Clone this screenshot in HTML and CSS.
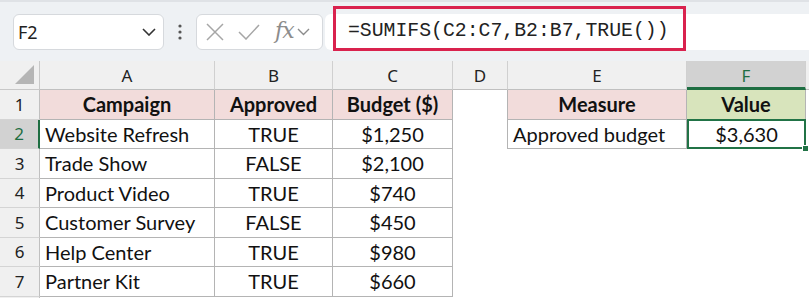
FILE: index.html
```html
<!DOCTYPE html>
<html>
<head>
<meta charset="utf-8">
<link rel="stylesheet" href="styles.css">
</head>
<body>
<div class="app">
  <div class="toolbar">
    <div class="namebox">
      <span class="namebox-text">F2</span>
      <svg class="chev" width="14" height="8" viewBox="0 0 14 8"><path d="M1 1 L7 7 L13 1" fill="none" stroke="#333" stroke-width="1.6"/></svg>
    </div>
    <div class="dots">
      <svg width="4" height="16" viewBox="0 0 4 16"><circle cx="2" cy="2" r="1.6" fill="#555"/><circle cx="2" cy="8" r="1.6" fill="#555"/><circle cx="2" cy="14" r="1.6" fill="#555"/></svg>
    </div>
    <div class="fxbox">
      <svg class="ico-x" width="18" height="18" viewBox="0 0 18 18"><path d="M1 1 L17 17 M17 1 L1 17" stroke="#a6a6a6" stroke-width="1.5" fill="none"/></svg>
      <svg class="ico-check" width="22" height="16" viewBox="0 0 22 16"><path d="M1 8 L8 15 L21 1" stroke="#a6a6a6" stroke-width="1.5" fill="none"/></svg>
      <span class="fx">fx</span>
      <svg class="ico-chev" width="13" height="8" viewBox="0 0 13 8"><path d="M1 1 L6.5 6.5 L12 1" stroke="#8c8c8c" stroke-width="1.4" fill="none"/></svg>
    </div>
    <div class="formula">
      <div class="formula-hl">=SUMIFS(C2:C7,B2:B7,TRUE())</div>
    </div>
  </div>
  <div class="sheet">
    <div class="corner"><span class="tri"></span></div>
    <div class="colh">A</div>
    <div class="colh">B</div>
    <div class="colh">C</div>
    <div class="colh">D</div>
    <div class="colh">E</div>
    <div class="colh sel">F</div>
    <div class="colh end"></div>

    <div class="rowh">1</div>
    <div class="c t hd pink">Campaign</div>
    <div class="c t hd pink">Approved</div>
    <div class="c t hd pink">Budget ($)</div>
    <div class="c d"></div>
    <div class="c t hd pink">Measure</div>
    <div class="c t hd green">Value</div>
    <div class="c"></div>

    <div class="rowh sel">2</div>
    <div class="c t">Website Refresh</div>
    <div class="c t ctr">TRUE</div>
    <div class="c t ctr">$1,250</div>
    <div class="c d"></div>
    <div class="c t">Approved budget</div>
    <div class="c t ctr active">$3,630<span class="handle"></span></div>
    <div class="c"></div>

    <div class="rowh">3</div>
    <div class="c t">Trade Show</div>
    <div class="c t ctr">FALSE</div>
    <div class="c t ctr">$2,100</div>
    <div class="c"></div>
    <div class="c"></div>
    <div class="c"></div>
    <div class="c"></div>

    <div class="rowh">4</div>
    <div class="c t">Product Video</div>
    <div class="c t ctr">TRUE</div>
    <div class="c t ctr">$740</div>
    <div class="c"></div>
    <div class="c"></div>
    <div class="c"></div>
    <div class="c"></div>

    <div class="rowh">5</div>
    <div class="c t">Customer Survey</div>
    <div class="c t ctr">FALSE</div>
    <div class="c t ctr">$450</div>
    <div class="c"></div>
    <div class="c"></div>
    <div class="c"></div>
    <div class="c"></div>

    <div class="rowh">6</div>
    <div class="c t">Help Center</div>
    <div class="c t ctr">TRUE</div>
    <div class="c t ctr">$980</div>
    <div class="c"></div>
    <div class="c"></div>
    <div class="c"></div>
    <div class="c"></div>

    <div class="rowh">7</div>
    <div class="c t">Partner Kit</div>
    <div class="c t ctr">TRUE</div>
    <div class="c t ctr">$660</div>
    <div class="c"></div>
    <div class="c"></div>
    <div class="c"></div>
    <div class="c"></div>

    <div class="rowh"></div>
    <div class="c"></div>
    <div class="c"></div>
    <div class="c"></div>
    <div class="c"></div>
    <div class="c"></div>
    <div class="c"></div>
    <div class="c"></div>
  </div>
</div>
</body>
</html>
```

FILE: styles.css
```css
* { box-sizing: border-box; }
html, body { margin: 0; padding: 0; background: #fff; }
body { width: 809px; height: 298px; overflow: hidden; }
.app { width: 809px; }

.toolbar {
  height: 61px;
  background: #eef1f4;
  border-top: 2px solid #dfe2e6;
  display: flex;
  align-items: center;
  padding-left: 13px;
}
.namebox {
  width: 151px;
  height: 36px;
  background: #fff;
  border: 1px solid #d6d9dd;
  border-radius: 6px;
  display: flex;
  align-items: center;
  justify-content: space-between;
  padding: 0 7px 0 4px;
  margin-top: 1px;
}
.namebox-text {
  font-family: "Noto Sans", "Open Sans", sans-serif;
  font-size: 18px;
  color: #222;
}
.dots {
  width: 32px;
  display: flex;
  justify-content: center;
  align-items: center;
  margin-top: 1px;
}
.fxbox {
  width: 127px;
  height: 36px;
  background: #fff;
  border: 1px solid #d6d9dd;
  border-radius: 6px;
  display: flex;
  align-items: center;
  padding-left: 9px;
  margin-top: 1px;
}
.ico-x { margin-right: 14px; }
.ico-check { margin-right: 15px; }
.fx {
  font-family: "DejaVu Serif", "Liberation Serif", serif;
  font-style: italic;
  font-size: 22px;
  color: #8c8c8c;
  margin-right: 3px;
  margin-top: -3px;
  letter-spacing: -1px;
}
.formula {
  flex: 1;
  height: 36px;
  margin-left: 2px;
  margin-top: 1px;
  background: #fff;
  border-radius: 6px 0 0 6px;
  display: flex;
  align-items: flex-start;
}
.formula-hl {
  margin-top: -8px;
  margin-left: 8px;
  width: 353px;
  height: 45px;
  border: 3px solid #d9224e;
  display: flex;
  align-items: center;
  padding-left: 12px;
  padding-top: 4px;
  font-family: "Liberation Mono", "DejaVu Sans Mono", monospace;
  font-size: 19.8px;
  color: #222;
}

.sheet {
  display: grid;
  grid-template-columns: 40px 175px 118px 120px 55px 179px 119px 3px;
  grid-template-rows: 29px repeat(7, 29.5px) 10px;
}
.corner {
  background: #f0f0f0;
  border-right: 1px solid #c8c8c8;
  border-bottom: 1px solid #c8c8c8;
  position: relative;
}
.tri {
  position: absolute;
  right: 5px;
  bottom: 5px;
  width: 0;
  height: 0;
  border-left: 19px solid transparent;
  border-bottom: 19px solid #b5b5b5;
}
.colh {
  background: #f0f0f0;
  border-right: 1px solid #d0d0d0;
  border-bottom: 1px solid #c0c0c0;
  font-family: "Noto Sans", "Open Sans", sans-serif;
  font-size: 17px;
  color: #222;
  display: flex;
  align-items: center;
  justify-content: center;
  padding-top: 1px;
}
.colh.sel {
  background: #d2d2d2;
  color: #1e6e42;
  border-bottom: 3px solid #1e6e42;
  padding-top: 3px;
}
.colh.end { border-right: none; }
.rowh {
  background: #f0f0f0;
  border-right: 1px solid #c0c0c0;
  border-bottom: 1px solid #d4d4d4;
  font-family: "Noto Sans", "Open Sans", sans-serif;
  font-size: 17px;
  color: #222;
  display: flex;
  align-items: center;
  justify-content: center;
}
.rowh.sel {
  background: #d2d2d2;
  color: #1e6e42;
  border-right: 2px solid #1e6e42;
}
.c {
  font-family: "Lato", "Liberation Sans", sans-serif;
  font-size: 20px;
  color: #111;
  display: flex;
  align-items: center;
  padding-left: 5px;
  white-space: nowrap;
}
.c.t {
  border-right: 1px solid #b4b4b4;
  border-bottom: 1px solid #b4b4b4;
}
.c.d { border-right: 1px solid #b4b4b4; }
.c.ctr { justify-content: center; padding-left: 0; }
.c.hd { font-weight: 700; justify-content: center; padding-left: 0; }
.pink { background: #f2dcdb; }
.green { background: #d8e4bc; }
.c.active {
  border: 2px solid #217346;
  position: relative;
  margin-top: -1px;
}
.handle {
  position: absolute;
  right: -5px;
  bottom: -5px;
  width: 7px;
  height: 7px;
  background: #217346;
  border: 1px solid #fff;
}
```
